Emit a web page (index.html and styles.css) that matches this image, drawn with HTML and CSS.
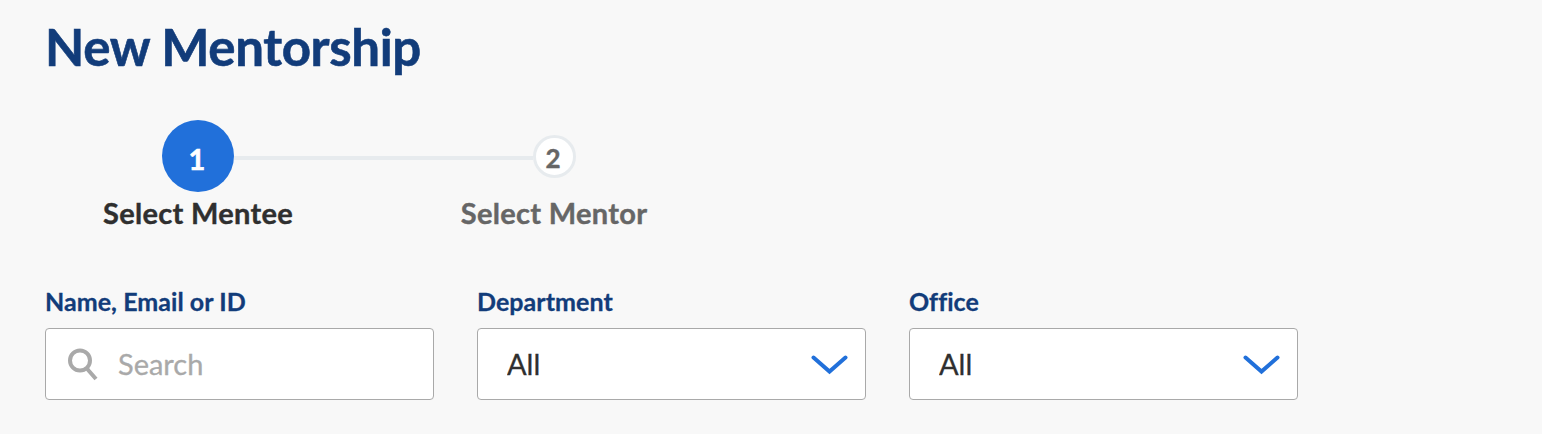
FILE: index.html
```html
<!DOCTYPE html>
<html lang="en">
<head>
    <meta charset="UTF-8">
    <meta name="viewport" content="width=device-width, initial-scale=1.0">
    <title>New Mentorship</title>
    <link rel="stylesheet" href="styles.css">
</head>
<body>

    <h1>New Mentorship</h1>

    <!-- Steps -->
    <ol class="stepper">
        <li class="step active">
            <div class="step-marker"><span class="step-number">1</span></div>
            <span class="step-label">Select Mentee</span>
        </li>
        <li class="step">
            <div class="step-marker"><span class="step-number">2</span></div>
            <span class="step-label">Select Mentor</span>
        </li>
    </ol>

    <!-- Filters -->
    <form class="filters">
        <div class="field">
            <label for="search">Name, Email or ID</label>
            <div class="control search">
                <svg class="search-icon" width="32" height="34" viewBox="0 0 32 34">
                    <circle cx="14" cy="13.5" r="10"></circle>
                    <path d="M20.5 21L23 24L30 32"></path>
                </svg>
                <input type="text" id="search" placeholder="Search">
            </div>
        </div>

        <div class="field">
            <label for="department">Department</label>
            <div class="control dropdown">
                <select id="department">
                    <option>All</option>
                </select>
                <svg class="chevron" width="38" height="22" viewBox="0 0 38 22">
                    <path d="M3.5 4.5L19.5 18.5L35.5 4.5"></path>
                </svg>
            </div>
        </div>

        <div class="field">
            <label for="office">Office</label>
            <div class="control dropdown">
                <select id="office">
                    <option>All</option>
                </select>
                <svg class="chevron" width="38" height="22" viewBox="0 0 38 22">
                    <path d="M3.5 4.5L19.5 18.5L35.5 4.5"></path>
                </svg>
            </div>
        </div>
    </form>

</body>
</html>
```
FILE: styles.css
```css
* {
    box-sizing: border-box;
}

body {
    font-family: Lato, sans-serif;
    background-color: #f8f8f8;
    margin: 0;
    padding: 17px 45px 0;
}

h1 {
    margin: 0;
    color: #123c7a;
    font-size: 51px;
    line-height: 60px;
    font-weight: bold;
    letter-spacing: -0.35px;
    -webkit-text-stroke: 0.6px;
}

.stepper {
    display: flex;
    list-style: none;
    margin: 43px 0 0 -25px;
    padding: 0;
}

.step {
    width: 356px;
    display: flex;
    flex-direction: column;
    align-items: center;
    color: #666;
}

.step-marker {
    width: 100%;
    height: 72px;
    display: flex;
    align-items: center;
    justify-content: center;
}

.step-marker::before,
.step-marker::after {
    content: "";
    flex: 1;
    height: 4px;
    margin-top: 4px;
}

.step.active .step-marker::after,
.step:last-child .step-marker::before {
    background: #e7ebee;
}

.step-number {
    width: 43px;
    height: 43px;
    display: flex;
    align-items: center;
    justify-content: center;
    padding: 4px 2px 0 0;
    border: 3px solid #e7ebee;
    border-radius: 50%;
    background: white;
    font-size: 26px;
    font-weight: bold;
    -webkit-text-stroke: 0.4px;
}

.active .step-number {
    width: 72px;
    height: 72px;
    padding: 5px 2px 0 0;
    border: none;
    background: #2170da;
    color: white;
    font-size: 29px;
    -webkit-text-stroke: 0.6px;
}

.step-label {
    margin-top: 3px;
    font-size: 29px;
    line-height: 36px;
    font-weight: bold;
    letter-spacing: 0.3px;
    -webkit-text-stroke: 0.4px;
}

.active .step-label {
    color: #2f2f2f;
}

.filters {
    display: flex;
    gap: 43px;
    margin-top: 54px;
}

.field {
    width: 389px;
}

label {
    display: block;
    color: #123c7a;
    font-size: 25px;
    line-height: 32px;
    font-weight: bold;
    letter-spacing: 0.05px;
    -webkit-text-stroke: 0.3px;
}

.control {
    display: flex;
    align-items: center;
    height: 72px;
    margin-top: 11px;
    border: 1px solid #a9a9a9;
    border-radius: 4px;
    background: white;
}

input, select {
    flex: 1;
    min-width: 0;
    height: 100%;
    border: none;
    background: transparent;
    appearance: none;
    outline: none;
    color: #2f2f2f;
    font-family: inherit;
    font-size: 29px;
    -webkit-text-stroke: 0.3px;
}

.search {
    padding: 0 20px;
}

.search input {
    padding: 0 0 2px;
    margin-left: 20px;
}

input::placeholder {
    color: #a9a9a9;
}

.search-icon {
    fill: none;
    stroke: #a9a9a9;
    stroke-width: 4;
    stroke-linejoin: round;
}

.dropdown {
    padding: 0 17px 0 29px;
}

select {
    padding: 0 0 2px;
}

.chevron {
    fill: none;
    stroke: #2170da;
    stroke-width: 4;
    stroke-linecap: round;
}
```
